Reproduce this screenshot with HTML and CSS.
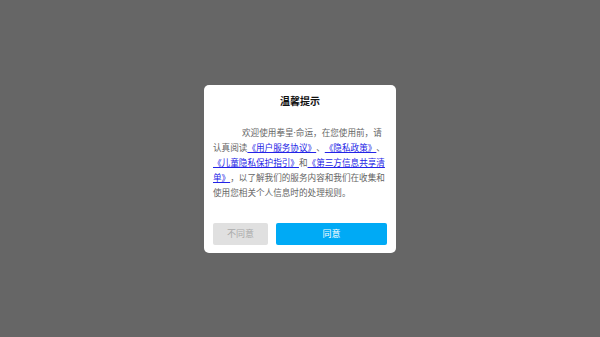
FILE: index.html
```html
<!DOCTYPE html>
<html>
  <head>
    <title>温馨提示</title>
    <link rel="stylesheet" href="styles.css">
  </head>
  <body>
    <div class="mask">
      <div class="dialog">
        <h2 class="dialog-title">温馨提示</h2>
        <p class="dialog-text">欢迎使用拳皇·命运，在您使用前，请认真阅读<a href="#">《用户服务协议》</a>、<a href="#">《隐私政策》</a>、<a href="#">《儿童隐私保护指引》</a>和<a href="#">《第三方信息共享清单》</a>，以了解我们的服务内容和我们在收集和使用您相关个人信息时的处理规则。</p>
        <div class="dialog-actions">
          <button class="btn btn-cancel">不同意</button>
          <button class="btn btn-ok">同意</button>
        </div>
      </div>
    </div>
  </body>
</html>
```

FILE: styles.css
```css
:root {
  --mask: #666666;
  --primary: #00aaf5;
  --text: #666666;
  --link: #2323e6;
  --radius: 5px;
}

html,
body {
  margin: 0;
  padding: 0;
  width: 600px;
  height: 337px;
  background: var(--mask);
}

body {
  font-family: "Noto Sans", "Noto Sans CJK SC", sans-serif;
  overflow: hidden;
}

.mask {
  height: 100%;
  display: flex;
  align-items: center;
  justify-content: center;
}

.dialog {
  width: 192px;
  height: 168px;
  box-sizing: border-box;
  padding: 8px 9px 8px 9px;
  background: #ffffff;
  border-radius: var(--radius);
  display: flex;
  flex-direction: column;
}

.dialog-title {
  margin: 0;
  font-size: 10px;
  line-height: 17px;
  font-weight: 700;
  color: #111111;
  text-align: center;
}

.dialog-text {
  margin: 16px 0 0 0;
  width: 174px;
  font-size: 8.6px;
  line-height: 15px;
  color: var(--text);
  text-indent: 29px;
  word-break: break-all;
  text-spacing-trim: space-all;
}

.dialog-text a {
  color: var(--link);
  text-decoration: underline;
}

.dialog-actions {
  margin-top: auto;
  display: flex;
  gap: 8px;
  width: 174px;
}

.btn {
  height: 22px;
  border: none;
  border-radius: 2px;
  font-family: inherit;
  font-size: 9px;
  padding: 0;
  cursor: pointer;
}

.btn-cancel {
  width: 55px;
  background: #e0e0e0;
  color: #aaaaaa;
}

.btn-ok {
  flex: 1;
  background: var(--primary);
  color: #ffffff;
}
```
